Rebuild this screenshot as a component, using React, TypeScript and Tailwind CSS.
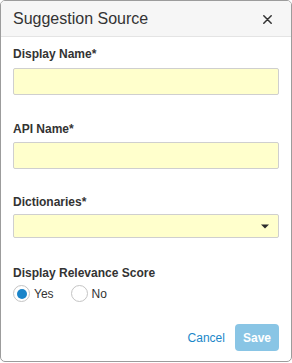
import React, { useState } from 'react';

const font = { fontFamily: '"Liberation Sans", Arial, Helvetica, sans-serif' };

const Field: React.FC<{ label: string; className?: string; children: React.ReactNode }> = ({ label, className, children }) => (
  <div className={className}>
    <div className="text-[12px] leading-[14px] font-bold text-[#333]">{label}</div>
    {children}
  </div>
);

const Radio: React.FC<{ checked: boolean; label: string; onClick: () => void }> = ({ checked, label, onClick }) => (
  <button type="button" onClick={onClick} className="flex items-center gap-[4px] cursor-pointer">
    <span className="w-[17px] h-[17px] rounded-full border border-[#c4c4c4] bg-white flex items-center justify-center">
      {checked && <span className="w-[10px] h-[10px] rounded-full bg-[#1a84c9]" />}
    </span>
    <span className="text-[12px] leading-[14px] text-[#333]">{label}</span>
  </button>
);

export default function App() {
  const [showScore, setShowScore] = useState(true);

  return (
    <div style={font} className="w-[292px] h-[362px] bg-white">
      <div className="h-full border border-[#9c9c9c] rounded-[5px] overflow-hidden flex flex-col">
        {/* header */}
        <div className="h-[35px] shrink-0 bg-[#f6f6f6] border-b border-[#e4e4e4] box-content flex items-center justify-between pl-[12px] pr-[19px]">
          <h2 className="text-[16px] leading-[18px] pt-[1px] text-[#333]">Suggestion Source</h2>
          <svg width="9" height="9" viewBox="0 0 9 9" className="mt-[1px]">
            <path d="M0.8 0.8 L8.2 8.2 M8.2 0.8 L0.8 8.2" stroke="#333" strokeWidth="1.5" strokeLinecap="round" />
          </svg>
        </div>

        {/* body */}
        <div className="px-[12px] pt-[10px] pb-[10px] flex flex-col">
          <Field label="Display Name*">
            <input className="mt-[7px] block w-full h-[27px] bg-[#ffffcc] border border-[#cfcfcf] rounded-[2px] outline-none px-2 text-[12px]" />
          </Field>

          <Field label="API Name*" className="mt-[27px]">
            <input className="mt-[6px] block w-full h-[27px] bg-[#ffffcc] border border-[#cfcfcf] rounded-[2px] outline-none px-2 text-[12px]" />
          </Field>

          <Field label="Dictionaries*" className="mt-[26px]">
            <div className="mt-[5px] w-full h-[24px] bg-[#ffffcc] border border-[#cfcfcf] rounded-[2px] flex items-center justify-end pr-[9px]">
              <svg width="8" height="5" viewBox="0 0 8 5">
                <path d="M0 0.5 H8 L4 4.5 Z" fill="#2b2b2b" />
              </svg>
            </div>
          </Field>

          <Field label="Display Relevance Score" className="mt-[28px]">
            <div className="mt-[5px] h-[17px] flex items-center gap-[17px]">
              <Radio checked={showScore} label="Yes" onClick={() => setShowScore(true)} />
              <Radio checked={!showScore} label="No" onClick={() => setShowScore(false)} />
            </div>
          </Field>

          {/* footer */}
          <div className="mt-[22px] flex items-center justify-end gap-[10px]">
            <button type="button" className="text-[12px] text-[#1b87c9]">Cancel</button>
            <button type="button" disabled className="h-[27px] px-[8px] rounded-[4px] bg-[#89c5e5] text-white text-[12px] font-bold">
              Save
            </button>
          </div>
        </div>
      </div>
    </div>
  );
}
